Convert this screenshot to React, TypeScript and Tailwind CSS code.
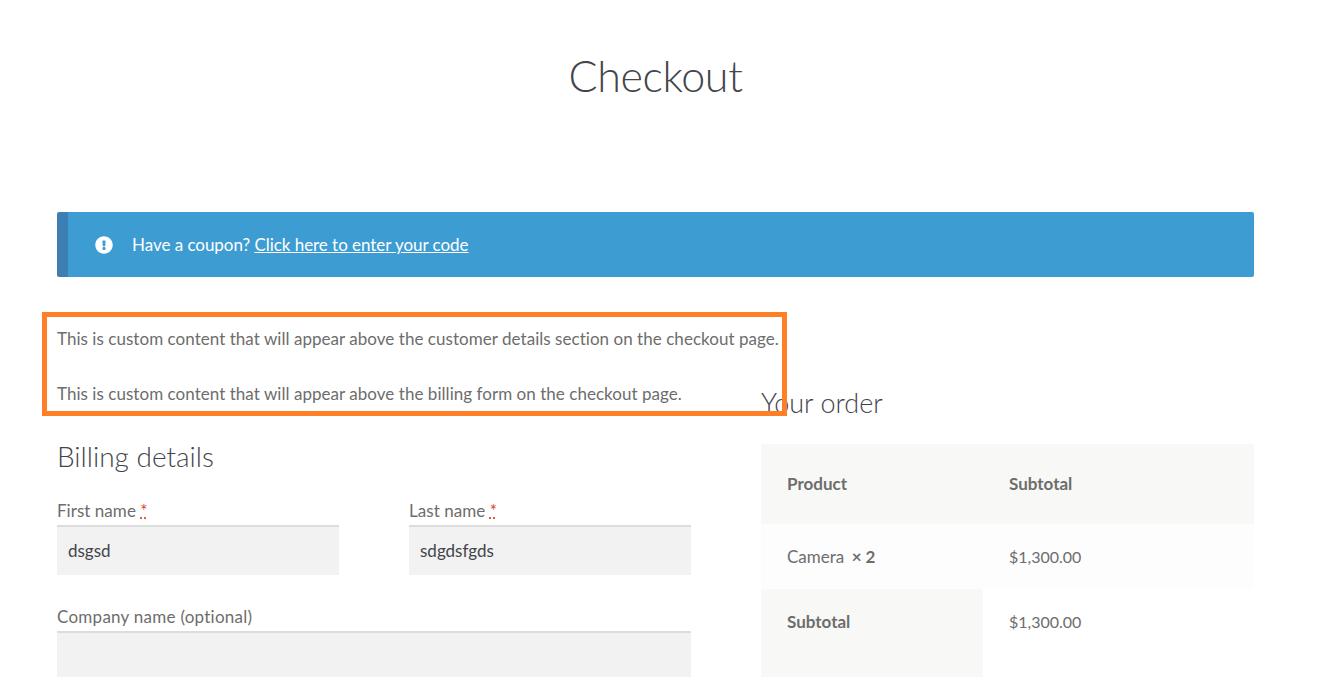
import type { ReactNode } from 'react';
import { FaExclamationCircle } from 'react-icons/fa';

function Field({ label, value, required, className }: { label: ReactNode; value?: string; required?: boolean; className?: string }) {
  return (
    <div className={className}>
      <label className="block h-[27px] text-[17px] leading-[25px] tracking-[0.04px] text-[#6d6d6d]">
        {label}
        {required && (
          <>
            {' '}
            <abbr className="text-[#e2401c] underline decoration-dotted">*</abbr>
          </>
        )}
      </label>
      <input
        readOnly
        value={value ?? ''}
        className="block h-[50px] w-full border-t-2 border-[#dcdcdc] bg-[#f2f2f2] px-[11px] pb-[2px] text-[17px] text-[#43454b] outline-none"
      />
    </div>
  );
}

export default function App() {
  return (
    <div className="h-[677px] overflow-hidden bg-white font-['Lato','Liberation_Sans',sans-serif] text-[#6d6d6d]">
      <div className="relative ml-[57px] w-[1197px]">
        <h1 className="h-[212px] pt-[44px] text-center text-[43px] font-light leading-[64px] tracking-[-0.35px] text-[#43454b]">Checkout</h1>

        <div className="flex h-[65px] items-center rounded-[2px] border-l-[11px] border-[#3d7fb3] bg-[#3d9cd2] pl-[27px] text-[17px] tracking-[-0.04px] text-white">
          <FaExclamationCircle className="mr-[19px] text-[18px]" />
          <span className="pt-[1px]">
            Have a coupon? <span className="underline">Click here to enter your code</span>
          </span>
        </div>

        <p className="mt-[48px] h-[28px] text-[17px] leading-[28px] tracking-[0.04px]">
          This is custom content that will appear above the customer details section on the checkout page.
        </p>

        <div className="mt-[14px] flex">
          <div className="w-[634px] shrink-0">
            <p className="mt-[13px] h-[28px] text-[17px] leading-[28px] tracking-[0.04px]">
              This is custom content that will appear above the billing form on the checkout page.
            </p>
            <h3 className="mt-[29px] h-[38px] text-[28px] font-light leading-[38px] text-[#43454b]">Billing details</h3>
            <div className="mt-[23px] flex justify-between">
              <Field label="First name" value="dsgsd" required className="w-[282px]" />
              <Field label="Last name" value="sdgdsfgds" required className="w-[282px]" />
            </div>
            <Field label={<span className="tracking-[0.26px]">Company name (optional)</span>} className="mt-[29px]" />
          </div>

          <div className="ml-[70px] w-[493px] shrink-0">
            <h3 className="mt-[17px] h-[38px] text-[27px] font-light leading-[38px] text-[#43454b]">Your order</h3>
            <div className="mt-[22px] text-[17px]">
              <div className="flex h-[80px] items-center bg-[#f8f8f6] font-bold">
                <div className="w-[222px] pl-[26px]">Product</div>
                <div className="pl-[26px]">Subtotal</div>
              </div>
              <div className="flex h-[65px] items-center bg-[#fdfdfd] pt-[1px]">
                <div className="w-[222px] pl-[26px]">
                  Camera <span className="ml-[3px] font-bold">× 2</span>
                </div>
                <div className="pl-[26px] text-[16px]">$1,300.00</div>
              </div>
              <div className="flex h-[90px]">
                <div className="h-full w-[222px] bg-[#f8f8f6] pl-[26px] pt-[20px] font-bold">Subtotal</div>
                <div className="pl-[26px] pt-[21px] text-[16px]">$1,300.00</div>
              </div>
            </div>
          </div>
        </div>

        <div className="absolute left-[-15px] top-[312px] h-[104px] w-[745px] border-[5px] border-[#ff7f27]" />
      </div>
    </div>
  );
}
